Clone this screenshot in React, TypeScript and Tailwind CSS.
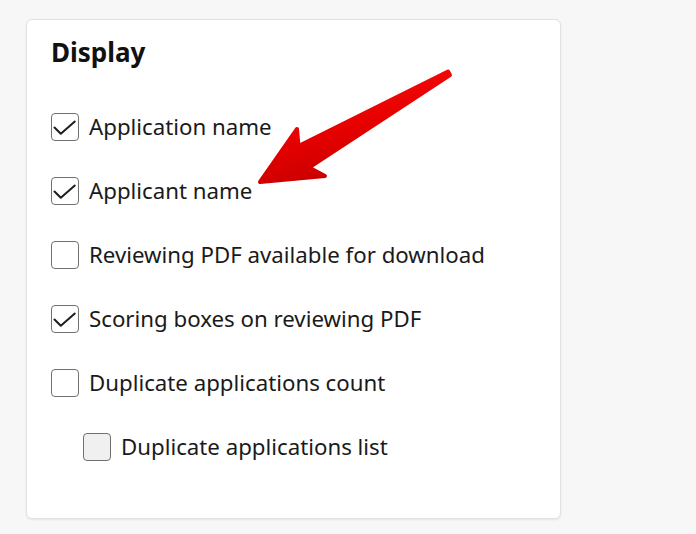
import { FC } from 'react';

interface Option {
  label: string;
  checked: boolean;
  nested?: boolean;
  disabled?: boolean;
}

const options: Option[] = [
  { label: 'Application name', checked: true },
  { label: 'Applicant name', checked: true },
  { label: 'Reviewing PDF available for download', checked: false },
  { label: 'Scoring boxes on reviewing PDF', checked: true },
  { label: 'Duplicate applications count', checked: false },
  { label: 'Duplicate applications list', checked: false, nested: true, disabled: true },
];

const Checkbox: FC<{ checked: boolean; disabled?: boolean }> = ({ checked, disabled }) => (
  <span
    className={`relative flex h-[28px] w-[28px] shrink-0 items-center justify-center rounded-[4px] border border-[#707070] ${
      disabled ? 'bg-[#f0f0f0]' : 'bg-white'
    }`}
  >
    {checked && (
      <svg width="28" height="28" viewBox="0 0 28 28" className="absolute -left-px -top-px">
        <path d="M3.5 14.5 L9.8 20.8 L23.8 8.6" fill="none" stroke="#1c1c1c" strokeWidth="2" strokeLinecap="round" strokeLinejoin="round" />
      </svg>
    )}
  </span>
);

const Arrow: FC = () => (
  <svg width="696" height="534" viewBox="0 0 696 534" className="pointer-events-none absolute left-0 top-0">
    <defs>
      <linearGradient id="arrowFill" x1="0" y1="0" x2="0.45" y2="1">
        <stop offset="0" stopColor="#ff1414" />
        <stop offset="0.6" stopColor="#e60000" />
        <stop offset="1" stopColor="#c40000" />
      </linearGradient>
    </defs>
    <path
      d="M260 182 L325 176 L309 167.5 L450 75 L448 71.5 L298.5 146 L297 129 Z"
      fill="url(#arrowFill)"
      stroke="url(#arrowFill)"
      strokeWidth="4"
      strokeLinejoin="round"
    />
  </svg>
);

const App: FC = () => {
  return (
    <div className="relative h-[534px] w-[696px] bg-[#f7f7f7] pl-[26px] pt-[19px] font-['Noto_Sans',sans-serif]">
      <div className="h-[500px] w-[535px] rounded-[6px] border border-[#e2e2e2] bg-white px-6 pt-[14px] shadow-[0_1px_2px_rgba(0,0,0,0.08)]">
        <h2 className="mb-[43px] text-[26px] leading-[36px] font-bold text-[#111]">Display</h2>
        <div className="flex flex-col gap-9">
          {options.map((opt) => (
            <label
              key={opt.label}
              className={`flex h-[28px] items-center gap-[10px] text-[22.25px] leading-[28px] text-[#1a1a1a] ${
                opt.nested ? 'pl-[32px]' : ''
              }`}
            >
              <Checkbox checked={opt.checked} disabled={opt.disabled} />
              <span>{opt.label}</span>
            </label>
          ))}
        </div>
      </div>
      <Arrow />
    </div>
  );
};

export default App;
